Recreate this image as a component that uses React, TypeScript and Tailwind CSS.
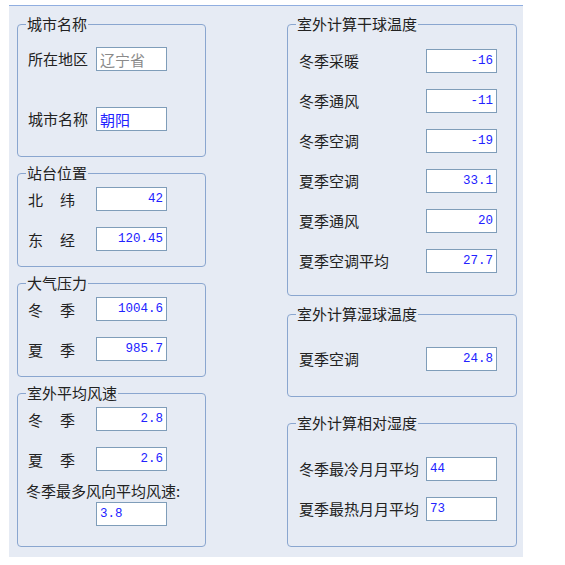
import React from "react";

const cjk = "font-['Noto_Sans_CJK_SC','Noto_Sans',sans-serif]";

function GroupBox({
  title,
  className,
  inner,
  children,
}: {
  title: string;
  className: string;
  inner: string;
  children: React.ReactNode;
}) {
  return (
    <div className={`box-border border border-[#8aa6cf] rounded-[4px] ${className}`}>
      <div className="-mt-[11px] ml-[8px] h-[20px] w-fit bg-[#e6ebf4] px-[1px] text-[15px] leading-[20px] text-[#222]">
        {title}
      </div>
      <div className={inner}>{children}</div>
    </div>
  );
}

function Field({
  value,
  align = "right",
  tone = "blue",
}: {
  value: string;
  align?: "left" | "right";
  tone?: "blue" | "gray" | "cjk";
}) {
  const color = tone === "gray" ? "text-[#8a8a8a]" : "text-[#2222ff]";
  const font =
    tone === "blue"
      ? "font-['Liberation_Mono',monospace] text-[12.5px]"
      : "text-[15px]";
  return (
    <div
      className={`box-border flex h-[24px] w-[71px] shrink-0 items-center border border-[#7f9db9] bg-white px-[3px] ${
        align === "right" ? "justify-end" : "justify-start"
      }`}
    >
      <span className={`${font} ${color} leading-none`}>{value}</span>
    </div>
  );
}

function Row({
  label,
  value,
  labelWidth,
  className = "",
  spaced = false,
  align,
  tone,
}: {
  label: string;
  value: string;
  labelWidth: string;
  className?: string;
  spaced?: boolean;
  align?: "left" | "right";
  tone?: "blue" | "gray" | "cjk";
}) {
  return (
    <div className={`flex h-[24px] items-center ${className}`}>
      <div className={`${labelWidth} shrink-0 text-[15px] leading-[20px] text-[#222]`}>
        {spaced ? (
          <span className="flex gap-[17px] pt-[1px]">
            <span>{label[0]}</span>
            <span>{label[1]}</span>
          </span>
        ) : (
          <span className="pt-[1px]">{label}</span>
        )}
      </div>
      <Field value={value} align={align} tone={tone} />
    </div>
  );
}

export default function App() {
  return (
    <div className={`h-[565px] w-[565px] bg-white pt-[5px] pl-[9px] ${cjk}`}>
      <div className="box-border flex h-[552px] w-[514px] border-t border-[#90aee0] bg-[#e6ebf4] pl-[8px] pt-[18px]">
        {/* left column */}
        <div className="flex w-[189px] flex-col">
          <GroupBox title="城市名称" className="h-[133px]" inner="pl-[10px]">
            <Row label="所在地区" value="辽宁省" labelWidth="w-[68px]" className="mt-[13px]" align="left" tone="gray" />
            <Row label="城市名称" value="朝阳" labelWidth="w-[68px]" className="mt-[36px]" align="left" tone="cjk" />
          </GroupBox>

          <GroupBox title="站台位置" className="mt-[16px] h-[94px]" inner="pl-[10px]">
            <Row label="北纬" spaced value="42" labelWidth="w-[68px]" className="mt-[4px]" />
            <Row label="东经" spaced value="120.45" labelWidth="w-[68px]" className="mt-[16px]" />
          </GroupBox>

          <GroupBox title="大气压力" className="mt-[16px] h-[94px]" inner="pl-[10px]">
            <Row label="冬季" spaced value="1004.6" labelWidth="w-[68px]" className="mt-[4px]" />
            <Row label="夏季" spaced value="985.7" labelWidth="w-[68px]" className="mt-[16px]" />
          </GroupBox>

          <GroupBox title="室外平均风速" className="mt-[16px] h-[154px]" inner="pl-[10px]">
            <Row label="冬季" spaced value="2.8" labelWidth="w-[68px]" className="mt-[4px]" />
            <Row label="夏季" spaced value="2.6" labelWidth="w-[68px]" className="mt-[16px]" />
            <div className="-ml-[2px] mt-[10px] h-[20px] text-[15px] leading-[20px] text-[#222]">
              冬季最多风向平均风速:
            </div>
            <div className="ml-[68px] mt-[1px]">
              <Field value="3.8" align="left" />
            </div>
          </GroupBox>
        </div>

        {/* right column */}
        <div className="ml-[81px] flex w-[230px] flex-col">
          <GroupBox title="室外计算干球温度" className="h-[272px]" inner="pl-[11px]">
            <Row label="冬季采暖" value="-16" labelWidth="w-[127px]" className="mt-[15px]" />
            <Row label="冬季通风" value="-11" labelWidth="w-[127px]" className="mt-[16px]" />
            <Row label="冬季空调" value="-19" labelWidth="w-[127px]" className="mt-[16px]" />
            <Row label="夏季空调" value="33.1" labelWidth="w-[127px]" className="mt-[16px]" />
            <Row label="夏季通风" value="20" labelWidth="w-[127px]" className="mt-[16px]" />
            <Row label="夏季空调平均" value="27.7" labelWidth="w-[127px]" className="mt-[16px]" />
          </GroupBox>

          <GroupBox title="室外计算湿球温度" className="mt-[18px] h-[83px]" inner="pl-[11px]">
            <Row label="夏季空调" value="24.8" labelWidth="w-[127px]" className="mt-[23px]" />
          </GroupBox>

          <GroupBox title="室外计算相对湿度" className="mt-[26px] h-[124px]" inner="pl-[11px]">
            <Row label="冬季最冷月月平均" value="44" labelWidth="w-[127px]" className="mt-[24px]" align="left" />
            <Row label="夏季最热月月平均" value="73" labelWidth="w-[127px]" className="mt-[16px]" align="left" />
          </GroupBox>
        </div>
      </div>
    </div>
  );
}
